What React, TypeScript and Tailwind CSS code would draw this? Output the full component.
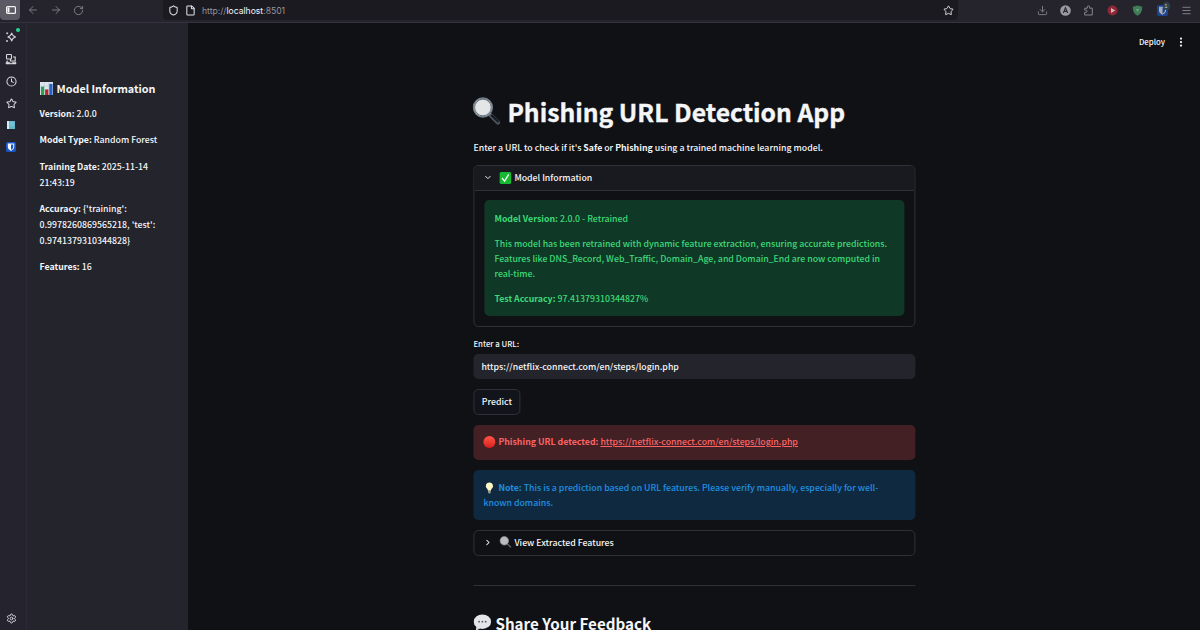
import type { ReactNode } from "react";
import {
  ArrowLeft,
  ArrowRight,
  ChevronDown,
  ChevronRight,
  Clock,
  Download,
  EllipsisVertical,
  File,
  Menu,
  RotateCw,
  Settings,
  Shield,
  Star,
} from "lucide-react";

function SearchEmoji({ className }: { className: string }) {
  return (
    <svg viewBox="0 0 28 28" className={className}>
      <path d="M17.5 17.5l8 8" stroke="#4b5560" strokeWidth="4.2" strokeLinecap="round" />
      <path d="M19.5 18.5l6 6" stroke="#15191e" strokeWidth="2" strokeLinecap="round" />
      <circle cx="10.5" cy="10.5" r="9.5" fill="#e3e5e6" stroke="#6f7f8c" strokeWidth="1.3" />
      <circle cx="10.5" cy="10.5" r="8.3" fill="none" stroke="#39444e" strokeWidth="0.7" />
    </svg>
  );
}

function SmallSearchEmoji() {
  return (
    <svg viewBox="0 0 12 12" className="-mt-px size-3">
      <path d="M8 8l3.200 3" stroke="#5b5f63" strokeWidth="1.600" strokeLinecap="round" />
      <circle cx="4.900" cy="4.800" r="4.300" fill="#b9bbbd" stroke="#84888c" strokeWidth=".7" />
    </svg>
  );
}

function ChartEmoji() {
  return (
    <svg viewBox="0 0 14 14" className="size-[13px]">
      <rect width="14" height="14" fill="#dfe6ee" />
      <path d="M0 4.500h14M0 9h14M4.700 0v14M9.300 0v14" stroke="#b8c7d6" strokeWidth="0.5" />
      <rect x="1" y="5" width="3.500" height="9" fill="#2ba24c" />
      <rect x="5.500" y="8" width="3.500" height="6" fill="#b9242c" />
      <rect x="10" y="2" width="3.500" height="12" fill="#2563c4" />
    </svg>
  );
}

function CheckEmoji() {
  return (
    <svg viewBox="0 0 12 12" className="size-3">
      <rect width="12" height="12" rx="1.800" fill="#16b830" />
      <path d="M3 6.500l2.200 2.700L9 2.800" fill="none" stroke="#fff" strokeWidth="1.300" strokeLinecap="round" />
    </svg>
  );
}

function BulbEmoji() {
  return (
    <svg viewBox="0 0 12 12" className="size-3">
      <path d="M6 .4a3.600 3.600 0 0 0-2.300 6.400c.6.6.8 1.200.9 1.900h2.800c.1-.7.3-1.300.9-1.900A3.600 3.600 0 0 0 6 .4z" fill="#fff6c6" />
      <rect x="4.700" y="8.700" width="2.600" height="2.700" rx=".8" fill="#9b9c92" />
    </svg>
  );
}

function SpeechEmoji() {
  return (
    <svg viewBox="0 0 18 18" className="size-[18px]">
      <path d="M3 12l-.6 4.800L7.500 14z" fill="#d6d7d9" />
      <ellipse cx="9" cy="7.700" rx="8.700" ry="7.200" fill="#e4e5e6" />
      <g fill="#55585d">
        <circle cx="5.700" cy="7.700" r=".9" />
        <circle cx="9" cy="7.700" r=".9" />
        <circle cx="12.300" cy="7.700" r=".9" />
      </g>
    </svg>
  );
}

function BitwardenIcon({ className }: { className: string }) {
  return (
    <svg viewBox="0 0 10 10" className={className}>
      <rect width="10" height="10" rx="1.500" fill="#1755c5" />
      <path d="M1.800 1.500h6.400v3.600c0 1.900-1.500 2.900-3.200 3.800-1.700-.9-3.200-1.900-3.200-3.800z" fill="#f4f7fc" />
      <path d="M5 2.500h2.200v2.700c0 1.100-.9 1.900-2.200 2.600z" fill="#1755c5" />
    </svg>
  );
}

function Toolbar() {
  return (
    <header className="flex h-[23px] shrink-0 border-b border-[#35343e] bg-[#25242d] text-[#85848d]">
      <div className="flex size-5 items-center justify-center rounded-b-sm bg-[#5b5a65] pl-px text-[#f4f4f6]">
        <svg viewBox="0 0 10 8" className="h-2 w-[10px]" fill="none" stroke="currentColor">
          <rect x=".6" y=".6" width="8.800" height="6.800" rx="1" strokeWidth="1.200" />
          <rect x="1.500" y="1.500" width="2" height="5" fill="currentColor" stroke="none" />
        </svg>
      </div>
      <div className="ml-[7px] flex h-5 w-[136px] items-center gap-[11px]">
        <ArrowLeft className="size-3" strokeWidth={1.8} />
        <ArrowRight className="size-3" strokeWidth={1.8} />
        <RotateCw className="size-[11px]" strokeWidth={2} />
      </div>
      <div className="flex h-5 w-[795px] items-center rounded-b bg-[#1b1a21] pr-[4px] pl-[5px] text-[#e6e5ea]">
        <Shield className="size-[11px]" strokeWidth={2.2} />
        <File className="ml-[6px] size-[11px]" strokeWidth={2.2} />
        <p className="mt-[2px] ml-[6px] flex-1 font-[Inter] text-[8.600px] leading-3 text-[#96959d]">
          http://<span className="text-[#f3f3f5]">localhost</span>:8501
        </p>
        <Star className="size-[11px]" strokeWidth={2} />
      </div>
      <div className="flex h-5 flex-1 items-center justify-end gap-3 pr-[8.500px]">
        <Download className="size-[11px]" strokeWidth={2} />
        <svg viewBox="0 0 10 10" className="size-[11px]">
          <circle cx="5" cy="5" r="4.800" fill="#9b9aa3" />
          <path d="M3 7.200l2-4.700 2 4.700M3.700 5.800h2.600" fill="none" stroke="#292832" strokeWidth="1" />
        </svg>
        <svg viewBox="0 0 11 11" className="size-[11px]" fill="none" stroke="currentColor" strokeLinejoin="round">
          <path d="M1.700 10V7.300h1.200a1.100 1.100 0 0 0 0-2.200H1.700V3.200h2.600V2a1.200 1.200 0 0 1 2.400 0v1.200h2.600V10z" />
        </svg>
        <svg viewBox="0 0 11 11" className="ml-px size-[11px]">
          <circle cx="5.500" cy="5.500" r="5" fill="#8e2736" />
          <path d="M4 3l4.200 2.500L4 8z" fill="#cfb9bf" />
        </svg>
        <svg viewBox="0 0 11 11" className="ml-[2px] size-[11px]">
          <path d="M5.500.5l4.700 1.200C10.300 6 9 9 5.500 10.700 2 9 .7 6 .8 1.700z" fill="#3f7d58" />
          <path d="M3.500 4h4l-2 2.800z" fill="#6ca080" />
        </svg>
        <div className="relative ml-[2px] size-[11px]">
          <BitwardenIcon className="size-[11px] opacity-65" />
          <span className="absolute -top-[3px] -right-[2px] h-2 w-[7px] rounded-sm bg-[#2c4250] text-center font-['Liberation_Sans'] text-[6px] leading-2 text-[#b9c5ce]">
            1
          </span>
        </div>
        <Menu className="ml-px size-[11px]" strokeWidth={2} />
      </div>
    </header>
  );
}

function SideStrip() {
  return (
    <nav className="flex w-[27px] shrink-0 flex-col items-center border-r border-[#2c2b34] bg-[#25232d] pt-[8px] pr-[4px] pb-[6px] text-[#d9d8de]">
      <div className="relative size-3">
        <svg viewBox="0 0 12 12" className="size-3" fill="none" stroke="currentColor">
          <path d="M6.700 2c.5 2.500 1.300 3.300 3.800 4-2.500.7-3.300 1.500-3.800 4-.5-2.500-1.300-3.300-3.800-4 2.500-.7 3.300-1.500 3.800-4z" strokeWidth="1.100" strokeLinejoin="round" />
          <path d="M1.200 2.300h2M2.200 1.300v2M1 10h2M2 9v2" strokeWidth=".9" />
        </svg>
        <span className="absolute -top-[3px] -right-[3px] size-1 rounded-full bg-[#25d695]" />
      </div>
      <svg viewBox="0 0 12 12" className="mt-[10px] size-3" fill="none" stroke="currentColor" strokeWidth="1.100">
        <rect x="1.500" y="1.500" width="5" height="4.500" rx=".7" />
        <path d="M8 4h2.200v4H5.500v-2M2.200 7.500v2.300" />
        <path d="M1 9.200h3.500v1h3v-1H11V11H1z" fill="currentColor" strokeWidth=".5" />
      </svg>
      <Clock className="mt-[11px] size-[11px]" strokeWidth={2.2} />
      <Star className="mt-[11px] size-[11px]" strokeWidth={2.2} />
      <svg viewBox="0 0 8 8" className="mt-[12px] size-2">
        <rect width="8" height="8" fill="#67b7cc" />
        <rect width="2" height="8" fill="#d1eff4" />
        <path d="M3 2h4M3 4h4" stroke="#a6dce7" strokeWidth=".6" />
      </svg>
      <BitwardenIcon className="mt-[13px] size-[10px]" />
      <Settings className="mt-auto size-[11px]" strokeWidth={2} />
    </nav>
  );
}

function Sidebar() {
  return (
    <aside className="w-[161px] shrink-0 bg-[#23242c] pt-[57px] pl-[12.500px] text-[8.780px] leading-4 font-medium text-[#f5f6f8]">
      <h2 className="flex items-center gap-1 text-[10.800px] font-semibold whitespace-nowrap">
        <ChartEmoji />
        Model Information
      </h2>
      <div className="mt-[10px] flex flex-col gap-[10.300px] whitespace-nowrap">
        <p>
          <b>Version:</b> 2.0.0
        </p>
        <p>
          <b>Model Type:</b> Random Forest
        </p>
        <p>
          <b>Training Date:</b> 2025-11-14
          <br />
          21:43:19
        </p>
        <p>
          <b>Accuracy:</b> {"{'training':"}
          <br />
          {"0.9978260869565218, 'test':"}
          <br />
          {"0.9741379310344828}"}
        </p>
        <p>
          <b>Features:</b> 16
        </p>
      </div>
    </aside>
  );
}

function Alert({ className, children }: { className: string; children: ReactNode }) {
  return <div className={`rounded-[5px] px-[10px] leading-[15px] whitespace-nowrap ${className}`}>{children}</div>;
}

export default function App() {
  return (
    <div className="flex h-[630px] w-[1200px] flex-col overflow-hidden bg-[#101115] font-['Noto_Sans_CJK_SC',sans-serif]">
      <Toolbar />
      <div className="flex min-h-0 flex-1">
        <SideStrip />
        <Sidebar />
        <main className="flex flex-1 flex-col text-[8.780px] font-medium text-[#f5f6f8]">
          <div className="flex h-[38px] shrink-0 items-center justify-end gap-[10px] pr-[13px] text-[7.800px]">
            Deploy
            <EllipsisVertical className="size-3" strokeWidth={2.500} />
          </div>
          <div className="mx-auto flex w-[442px] translate-x-[0.4px] flex-col">
            <h1 className="mt-[34px] flex h-8 items-center gap-[6px] text-[24.700px] leading-8 font-bold whitespace-nowrap [-webkit-text-stroke:0.35px]">
              <SearchEmoji className="-mt-px -ml-px mr-px size-7" />
              Phishing URL Detection App
            </h1>
            <p className="mt-[13px] leading-[15px] whitespace-nowrap">
              Enter a URL to check if it's <b>Safe</b> or <b>Phishing</b> using a trained machine learning model.
            </p>

            <section className="mt-[10px] rounded-[5px] border border-[#303138]">
              <div className="flex h-[25px] items-center rounded-t border-b border-[#303138] bg-[#191a20] pb-px pl-[9px]">
                <ChevronDown className="mr-[7px] size-[9px]" strokeWidth={2.600} />
                <CheckEmoji />
                <span className="ml-[3px]">Model Information</span>
              </div>
              <div className="px-[10px] pt-[9px] pb-[10px]">
                <Alert className="flex flex-col gap-[10px] bg-[#103826] pt-[11px] pb-[10px] text-[#3dd979]">
                  <p>
                    <b>Model Version:</b> 2.0.0 - Retrained
                  </p>
                  <p>
                    This model has been retrained with dynamic feature extraction, ensuring accurate predictions.
                    <br />
                    Features like DNS_Record, Web_Traffic, Domain_Age, and Domain_End are now computed in
                    <br />
                    real-time.
                  </p>
                  <p>
                    <b>Test Accuracy:</b> 97.41379310344827%
                  </p>
                </Alert>
              </div>
            </section>

            <label className="mt-[11px] text-[7.800px] leading-3">Enter a URL:</label>
            <div className="mt-[4px] flex h-[25px] items-center rounded-[5px] bg-[#23242c] px-2">
              https://netflix-connect.com/en/steps/login.php
            </div>
            <button className="mt-[10px] h-[26px] w-[47px] rounded-[5px] border border-[#303138] bg-[#11151b] pb-px">
              Predict
            </button>

            <Alert className="mt-[10px] flex items-center gap-[3px] bg-[#422024] pt-[9px] pb-[11px] text-[#fb6467]">
              <span className="size-3 rounded-full bg-linear-to-b from-[#ff5546] to-[#d9191c]" />
              <p>
                <b>Phishing URL detected:</b> <a className="underline">https://netflix-connect.com/en/steps/login.php</a>
              </p>
            </Alert>
            <Alert className="mt-[10px] bg-[#0f2a40] py-[10px] text-[#218fe0]">
              <p className="flex items-center gap-[3px]">
                <BulbEmoji />
                <span>
                  <b>Note:</b> This is a prediction based on URL features. Please verify manually, especially for well-
                </span>
              </p>
              <p>known domains.</p>
            </Alert>

            <section className="mt-[10px] flex h-[26px] items-center rounded-[5px] border border-[#303138] pb-px pl-[9px]">
              <ChevronRight className="mr-[7px] size-[9px]" strokeWidth={2.800} />
              <SmallSearchEmoji />
              <span className="ml-[3px]">View Extracted Features</span>
            </section>

            <hr className="mt-[29px] border-[#303138]" />
            <h2 className="mt-[25px] flex h-6 items-center gap-1 text-[15.200px] leading-6 font-bold whitespace-nowrap">
              <SpeechEmoji />
              Share Your Feedback
            </h2>
          </div>
        </main>
      </div>
    </div>
  );
}
